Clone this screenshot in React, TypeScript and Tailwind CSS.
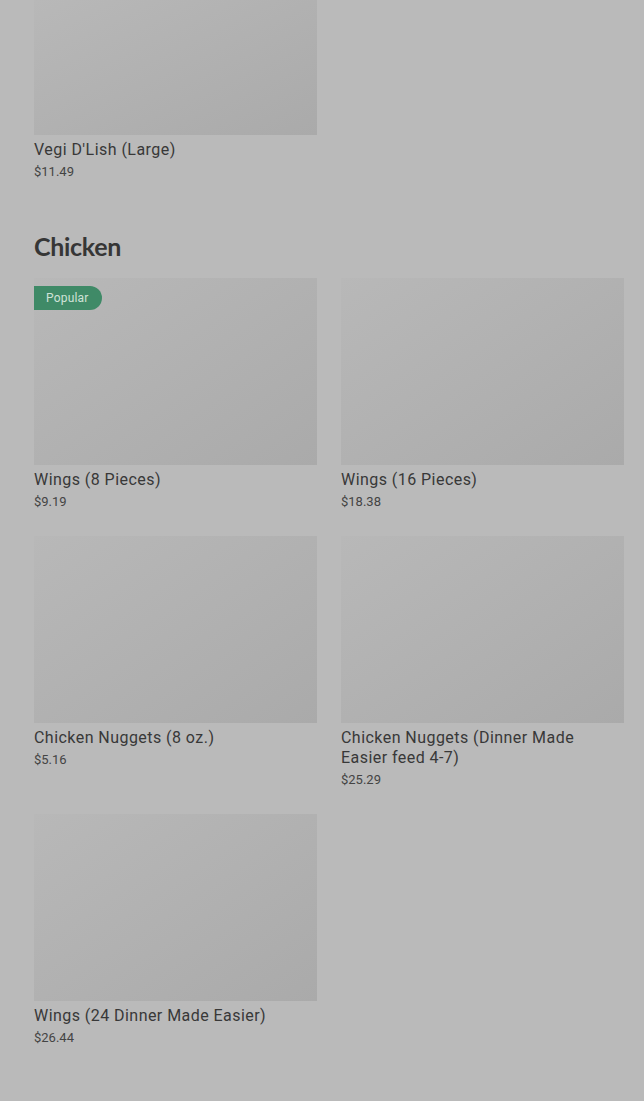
import React from "react";

type Item = {
  name: string;
  price: string;
  popular?: boolean;
};

const chicken: Item[] = [
  { name: "Wings (8 Pieces)", price: "$9.19", popular: true },
  { name: "Wings (16 Pieces)", price: "$18.38" },
  { name: "Chicken Nuggets (8 oz.)", price: "$5.16" },
  { name: "Chicken Nuggets (Dinner Made Easier feed 4-7)", price: "$25.29" },
  { name: "Wings (24 Dinner Made Easier)", price: "$26.44" },
];

function ItemCard({ item, imageClass = "h-[187px]" }: { item: Item; imageClass?: string }) {
  return (
    <div className="flex flex-col">
      <div
        className={`relative w-full ${imageClass} bg-gradient-to-br from-[#b8b8b8] to-[#aaaaaa]`}
      >
        {item.popular && (
          <span className="absolute left-0 top-[8px] flex h-[24px] items-center rounded-r-full bg-[#3f8a67] pl-3 pr-[13px] text-[12px] tracking-[0.2px] text-[#cfe2d7]">
            Popular
          </span>
        )}
      </div>
      <div className="mt-[5px] pr-4 text-[16px] leading-[20px] tracking-[0.45px] text-[#383838]">
        {item.name}
      </div>
      <div className="mt-[2px] text-[13px] leading-[20px] text-[#444444]">{item.price}</div>
    </div>
  );
}

export default function App() {
  return (
    <div
      className="min-h-[1101px] w-full bg-[#bababa] pl-[34px] pr-[20px]"
      style={{ fontFamily: "Roboto, 'Liberation Sans', sans-serif" }}
    >
      {/* previous section, scrolled partly out of view */}
      <div className="grid grid-cols-2 gap-x-6">
        <ItemCard item={{ name: "Vegi D'Lish (Large)", price: "$11.49" }} imageClass="h-[135px]" />
      </div>

      {/* Chicken */}
      <h2
        className="mt-[50px] mb-[18px] text-[25px] font-bold leading-[28px] tracking-[-0.3px] text-[#363636]"
        style={{ fontFamily: "Lato, 'Noto Sans', sans-serif" }}
      >
        Chicken
      </h2>
      <div className="grid grid-cols-2 gap-x-6 gap-y-6">
        {chicken.map((item) => (
          <ItemCard key={item.name} item={item} />
        ))}
      </div>
    </div>
  );
}
